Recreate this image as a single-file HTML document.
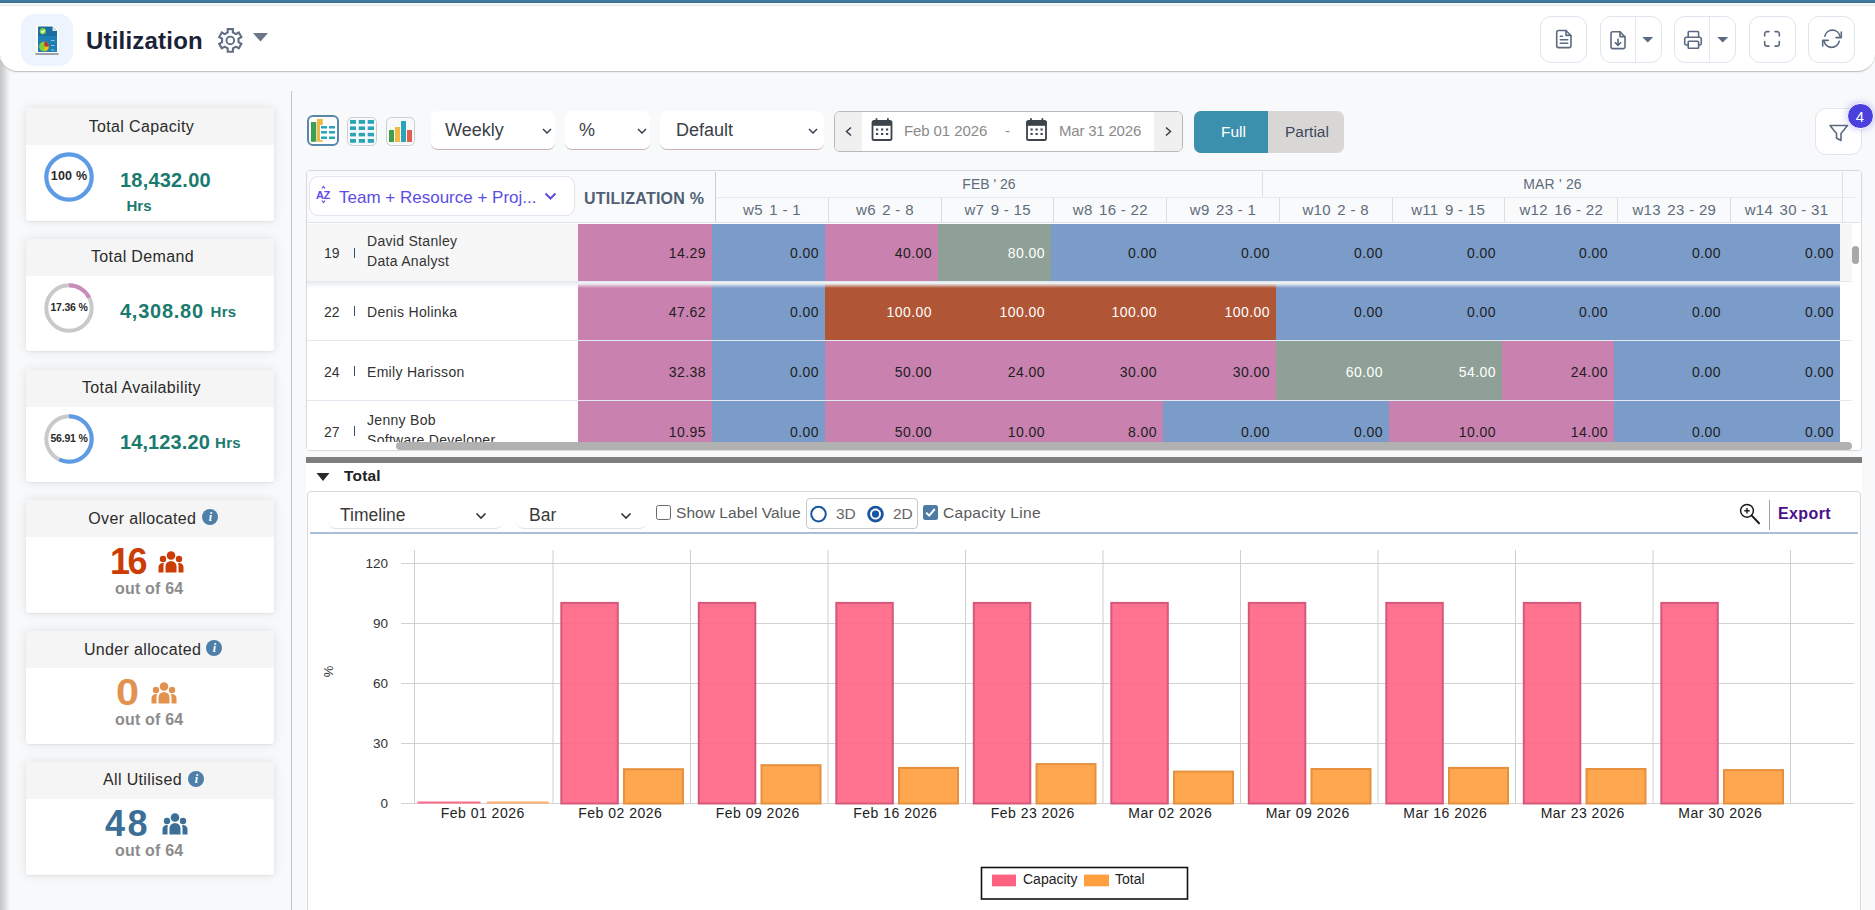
<!DOCTYPE html>
<html><head><meta charset="utf-8">
<style>
*{box-sizing:border-box;margin:0;padding:0}
html,body{width:1875px;height:910px;overflow:hidden}
body{position:relative;background:#f8f9fb;font-family:"Liberation Sans",sans-serif;color:#333}
.a{position:absolute}
.t{position:absolute;white-space:nowrap;line-height:1}
/* header */
#topbar{left:0;top:0;width:1875px;height:3px;background:linear-gradient(#437a9d 0,#437a9d 2px,#376f93 2px)}
#hdr{left:0;top:5px;width:1875px;height:67px;background:#fff;border-top:1px solid #e2e8f0;border-bottom:1px solid #c4c4c4;border-radius:0 0 18px 18px;box-shadow:0 1px 2px rgba(0,0,0,.06)}
#lshadow{left:0;top:60px;width:11px;height:850px;background:linear-gradient(90deg,#c6c6c6 0,#c8c9c9 1px,#cfd0d0 2.5px,#d9dadb 4.5px,#e5e6e8 6.5px,#f0f1f3 8.5px,#f8f9fb 11px)}
.hbtn{position:absolute;top:16px;height:47px;border:1px solid #dfe5ee;border-radius:11px;background:#fff}
/* cards */
.card{position:absolute;left:26px;width:248px;height:114px;background:#fff;border-radius:3px;box-shadow:0 0 11px rgba(0,0,0,.1),0 1px 2px rgba(0,0,0,.05)}
.card .ch{position:absolute;left:0;top:0;width:100%;height:37px;background:#f5f5f5;border-radius:2px 2px 0 0}
.card .ct{position:absolute;top:11px;left:0;width:100%;text-align:center;font-size:15px;color:#2b2b2b;line-height:1}
.num{position:absolute;color:#1b7a6e;font-weight:bold;white-space:nowrap;line-height:1}
.ring{position:absolute}
.cnt{position:absolute;left:0;width:100%;text-align:center;font-weight:bold;white-space:nowrap;line-height:1}
.outof{position:absolute;left:0;width:100%;text-align:center;top:81px;font-size:15px;font-weight:bold;color:#8a8a8a;line-height:1}
.info{display:inline-block;width:16px;height:16px;border-radius:50%;background:#4e7fa8;vertical-align:-2px;margin-left:4px;position:relative}
.info:after{content:"i";position:absolute;left:0;top:2px;width:16px;text-align:center;color:#fff;font:italic bold 12px "Liberation Serif",serif;line-height:1}
.dd{position:absolute;top:111px;height:39px;background:#fff;border-radius:7px;border-bottom:1px solid #cbb3b3}
.ddt{position:absolute;left:14px;top:10.3px;font-size:18px;color:#3b4049;line-height:1;white-space:nowrap}
.chev{position:absolute;top:17px}
.cell{position:absolute;text-align:right;padding-right:6px;font-size:14px;white-space:nowrap;letter-spacing:.45px;text-indent:0}
.rn{font-size:14px;color:#333}
.nm{font-size:14px;color:#333;letter-spacing:.3px}
.wk{font-size:14px;color:#5e6c7b;letter-spacing:.3px}
.wk b{font-weight:normal;margin-right:2px}
</style></head>
<body>
<div id="lshadow" class="a"></div>
<div id="topbar" class="a"></div>
<div id="hdr" class="a"></div>


<!-- header content -->
<div class="a" style="left:21px;top:14px;width:52px;height:52px;border-radius:14px;background:#eef4fd"></div>
<svg class="a" style="left:35px;top:24px" width="26" height="32" viewBox="0 0 26 32">
 <rect x="0.5" y="28.5" width="23" height="2.5" fill="#9aa0a6"/>
 <path d="M1 1H18L24 7V29H1z" fill="#fff"/>
 <path d="M3 2.5H17.5L22 7V28H3z" fill="#1a6d9e"/>
 <path d="M3 12H22V28H3z" fill="#1f7fb5"/>
 <path d="M17.5 2.5L22 7H17.5z" fill="#dde3e8"/>
 <circle cx="7.8" cy="7.2" r="3.1" fill="#7fd13b"/>
 <path d="M6.2 7.2l1.2 1.3 2.2-2.4" stroke="#fff" stroke-width="1.2" fill="none"/>
 <circle cx="9.2" cy="22.5" r="4.8" fill="#e8c21a"/>
 <path d="M9.2 22.5V17.7A4.8 4.8 0 0 1 14 22.5z" fill="#b7343a"/>
 <path d="M9.2 22.5V17.7A4.8 4.8 0 0 0 9.2 27.3z" fill="#7bd03a"/>
 <rect x="16" y="16" width="3.5" height="1" fill="#8cc6e6"/><rect x="16" y="21" width="3.5" height="1" fill="#8cc6e6"/><rect x="16" y="25.5" width="3.5" height="1" fill="#8cc6e6"/>
</svg>
<div class="t" style="left:86px;top:28.5px;font-size:24px;font-weight:bold;color:#1b2236;letter-spacing:.2px">Utilization</div>
<svg class="a" style="left:215px;top:25px" width="31" height="31" viewBox="215 25 31 31"><path fill="none" stroke="#5f6e82" stroke-width="2.1" stroke-linejoin="miter" d="M227.70 32.40L227.70 29.10L232.90 29.10L232.90 32.40L235.93 34.15L238.79 32.50L241.39 37.00L238.53 38.65L238.53 42.15L241.39 43.80L238.79 48.30L235.93 46.65L232.90 48.40L232.90 51.70L227.70 51.70L227.70 48.40L224.67 46.65L221.81 48.30L219.21 43.80L222.07 42.15L222.07 38.65L219.21 37.00L221.81 32.50L224.67 34.15Z"/><circle cx="230.3" cy="40.4" r="3.8" fill="none" stroke="#5f6e82" stroke-width="1.9"/></svg>
<svg class="a" style="left:253px;top:33px" width="15" height="9" viewBox="0 0 15 9"><path d="M0 0H15L7.5 8.5z" fill="#6b7689"/></svg>

<!-- header buttons -->
<div class="hbtn" style="left:1540px;width:47px"></div>
<div class="hbtn" style="left:1600px;width:62px"><div class="a" style="left:34px;top:0;width:1px;height:45px;background:#e3e8ef"></div></div>
<div class="hbtn" style="left:1674px;width:62px"><div class="a" style="left:34px;top:0;width:1px;height:45px;background:#e3e8ef"></div></div>
<div class="hbtn" style="left:1749px;width:47px"></div>
<div class="hbtn" style="left:1808px;width:47px"></div>
<svg class="a" style="left:1530px;top:10px" width="345" height="60" viewBox="1530 10 345 60" fill="none" stroke="#5b6a80" stroke-width="1.6" stroke-linejoin="round" stroke-linecap="round">
 <path d="M1558.5 30.5H1566L1571 35.8V45.8a1.8 1.8 0 0 1-1.8 1.8H1558.5a1.8 1.8 0 0 1-1.8-1.8V32.3a1.8 1.8 0 0 1 1.8-1.8z"/><path d="M1566 30.6V35.4H1570.8"/><path d="M1560.3 36.3H1562.4M1560.3 39.8H1567.7M1560.3 43.2H1567.7"/>
 <path d="M1612.8 31.7H1620L1625 37V46.8a1.8 1.8 0 0 1-1.8 1.8H1612.8a1.8 1.8 0 0 1-1.8-1.8V33.5a1.8 1.8 0 0 1 1.8-1.8z"/><path d="M1620 31.8V36.6H1624.8"/><path d="M1618 39.4V45.3M1615.4 42.7L1618 45.4L1620.6 42.7"/>
 <path d="M1688.2 37V32.3a.8.8 0 0 1 .8-.8H1697.8a.8.8 0 0 1 .8.8V37"/><path d="M1688 45H1686.3a1.6 1.6 0 0 1-1.6-1.6V39a1.8 1.8 0 0 1 1.8-1.8H1699.5a1.8 1.8 0 0 1 1.8 1.8V43.4a1.6 1.6 0 0 1-1.6 1.6H1698.6"/><rect x="1688.2" y="41.3" width="10.4" height="7" rx=".8"/>
 <path d="M1764.7 36V33.8a2.2 2.2 0 0 1 2.2-2.2H1769M1775 31.6H1777.1a2.2 2.2 0 0 1 2.2 2.2V36M1779.3 41.6V43.9a2.2 2.2 0 0 1-2.2 2.2H1775M1769 46.1H1766.9a2.2 2.2 0 0 1-2.2-2.2V41.6"/>
 <path d="M1824.8 36.2A7.8 7.8 0 0 1 1840 36.2"/><path d="M1841.3 32.1V37.6H1836"/><path d="M1839.2 41.3A7.8 7.8 0 0 1 1824 41.3"/><path d="M1822.7 46V40.4H1828.2"/>
</svg>
<svg class="a" style="left:1642px;top:37px" width="12" height="6" viewBox="0 0 12 6"><path d="M0.3 0H11.2L5.75 5.5z" fill="#5b6a80"/></svg>
<svg class="a" style="left:1717px;top:37px" width="12" height="6" viewBox="0 0 12 6"><path d="M0.3 0H11.2L5.75 5.5z" fill="#5b6a80"/></svg>
<!-- sidebar divider -->
<div class="a" style="left:291px;top:91px;width:1px;height:819px;background:#c4c4c4"></div>



<!-- toolbar -->
<div class="a" style="left:307px;top:115px;width:32px;height:31px;border:2px solid #5a87aa;border-radius:6px;background:#fff"></div>
<svg class="a" style="left:300px;top:108px" width="125" height="47" viewBox="300 108 125 47">
 <rect x="311" y="122" width="5.3" height="19.8" fill="#3f9e4f"/><rect x="317" y="119" width="5.8" height="22.8" fill="#f1b941"/>
 <rect x="320" y="125" width="16" height="15" fill="#fff"/>
 <g fill="#2ba4b8"><rect x="321" y="126" width="6" height="2.5"/><rect x="329" y="126" width="6" height="2.5"/><rect x="321" y="131" width="6" height="2.5"/><rect x="329" y="131" width="6" height="2.5"/><rect x="321" y="136.5" width="6" height="2.5"/><rect x="329" y="136.5" width="6" height="2.5"/>
 <rect x="350" y="120" width="6" height="3.8"/><rect x="358.7" y="120" width="6.3" height="3.8"/><rect x="367.7" y="120" width="6.3" height="3.8"/>
 <rect x="350" y="126.4" width="6" height="3.6"/><rect x="358.7" y="126.4" width="6.3" height="3.6"/><rect x="367.7" y="126.4" width="6.3" height="3.6"/>
 <rect x="350" y="132.8" width="6" height="3.6"/><rect x="358.7" y="132.8" width="6.3" height="3.6"/><rect x="367.7" y="132.8" width="6.3" height="3.6"/>
 <rect x="350" y="139" width="6" height="3.8"/><rect x="358.7" y="139" width="6.3" height="3.8"/><rect x="367.7" y="139" width="6.3" height="3.8"/></g>
 <rect x="347.5" y="117.5" width="29" height="28" rx="5" fill="none" stroke="#cdcdcd" stroke-width="1"/>
 <rect x="386.5" y="117.5" width="28" height="28" rx="5" fill="none" stroke="#cdcdcd" stroke-width="1"/>
 <rect x="389" y="130" width="5" height="12" fill="#3f9e4f"/><rect x="395" y="127" width="5" height="15" fill="#f1b941"/><rect x="401" y="121" width="5" height="21" fill="#2ba4b8"/><rect x="407" y="130" width="5" height="12" fill="#e35e4e"/>
</svg>
<div class="dd" style="left:431px;width:124px"><span class="ddt">Weekly</span><svg class="chev" style="left:111px" width="10" height="6" viewBox="0 0 10 6"><path d="M1 1l4 4 4-4" fill="none" stroke="#3a4250" stroke-width="1.5"/></svg></div>
<div class="dd" style="left:565px;width:85px"><span class="ddt">%</span><svg class="chev" style="left:72px" width="10" height="6" viewBox="0 0 10 6"><path d="M1 1l4 4 4-4" fill="none" stroke="#3a4250" stroke-width="1.5"/></svg></div>
<div class="dd" style="left:660px;width:164px"><span class="ddt" style="left:16px">Default</span><svg class="chev" style="left:148px" width="10" height="6" viewBox="0 0 10 6"><path d="M1 1l4 4 4-4" fill="none" stroke="#3a4250" stroke-width="1.5"/></svg></div>
<!-- date range -->
<div class="a" style="left:834px;top:111px;width:349px;height:41px;border:1px solid #b9b9b9;border-radius:6px;background:#fff;overflow:hidden">
 <div class="a" style="left:0;top:0;width:27px;height:39px;background:#f0f0f0"></div>
 <div class="a" style="left:319px;top:0;width:29px;height:39px;background:#f0f0f0"></div>
</div>
<svg class="a" style="left:830px;top:105px" width="360" height="50" viewBox="830 105 360 50">
 <path d="M851 127.5L846.5 131.5L851 135.5" fill="none" stroke="#333c4a" stroke-width="1.5"/>
 <path d="M1166 127.5L1170.5 131.5L1166 135.5" fill="none" stroke="#333c4a" stroke-width="1.5"/>
 <g id="cal"><rect x="872.5" y="121" width="19" height="19" rx="1.6" fill="none" stroke="#3d434b" stroke-width="1.8"/><rect x="872" y="121" width="20" height="4.8" fill="#3d434b"/><rect x="875.6" y="118.2" width="1.8" height="3.5" fill="#3d434b"/><rect x="887" y="118.2" width="1.8" height="3.5" fill="#3d434b"/>
 <g fill="#3d434b"><rect x="876" y="128.5" width="2.2" height="2"/><rect x="881" y="128.5" width="2.2" height="2"/><rect x="886" y="128.5" width="2.2" height="2"/><rect x="876" y="133" width="2.2" height="2"/><rect x="881" y="133" width="2.2" height="2"/><rect x="886" y="133" width="2.2" height="2"/></g></g>
 <use href="#cal" x="154.5"/>
</svg>
<div class="t" style="left:904px;top:123px;font-size:15px;letter-spacing:-.1px;color:#8a8a8a">Feb 01 2026</div>
<div class="t" style="left:1005px;top:123px;font-size:15px;color:#8a8a8a">-</div>
<div class="t" style="left:1059px;top:123px;font-size:15px;letter-spacing:-.2px;color:#8a8a8a">Mar 31 2026</div>
<!-- full partial -->
<div class="a" style="left:1194px;top:111px;width:150px;height:42px;border-radius:7px;background:#d9d7d6;overflow:hidden"><div class="a" style="left:0;top:0;width:74px;height:42px;background:#3a90ad"></div></div>
<div class="t" style="left:1221px;top:124px;font-size:15.5px;color:#fff">Full</div>
<div class="t" style="left:1285px;top:124px;font-size:15.5px;color:#3d4a5c">Partial</div>
<!-- filter -->
<div class="a" style="left:1815px;top:108px;width:47px;height:47px;border:1px solid #e2e6ec;border-radius:11px;background:#fff"></div>
<svg class="a" style="left:1828px;top:123px" width="22" height="20" viewBox="0 0 22 20"><path d="M2 2.5H19.5L13 10.5V17.5L8.5 15V10.5z" fill="none" stroke="#5b6a80" stroke-width="1.6" stroke-linejoin="round"/></svg>
<div class="a" style="left:1847px;top:102.5px;width:26.5px;height:26.5px;border-radius:50%;background:#4a40de;border:1.5px solid #fff;box-shadow:0 0 7px rgba(79,70,229,.35)"></div>
<div class="t" style="left:1847.5px;top:108.5px;width:25px;text-align:center;font-size:15px;color:#fff">4</div>

<!-- table -->
<div class="a" style="left:306px;top:170px;width:1556px;height:281px;border:1px solid #d9d9d9;border-radius:4px;background:#fff;overflow:hidden">
<div class="a" style="left:0;top:0;width:1556px;height:52px;background:#f9fafc"></div>
</div>
<div class="a" style="left:307px;top:223px;width:1553px;height:219px;overflow:hidden">
<div class="a" style="left:0;top:1px;width:271px;height:57px;background:#f7f7f7"></div>
<div class="cell" style="left:271px;top:1px;width:134px;height:57px;background:#c982b0;color:#1e1e1e;line-height:58px">14.29</div>
<div class="cell" style="left:405px;top:1px;width:113px;height:57px;background:#7b9bc9;color:#1e1e1e;line-height:58px">0.00</div>
<div class="cell" style="left:518px;top:1px;width:113px;height:57px;background:#c982b0;color:#1e1e1e;line-height:58px">40.00</div>
<div class="cell" style="left:631px;top:1px;width:113px;height:57px;background:#8fa097;color:#fff;line-height:58px">80.00</div>
<div class="cell" style="left:744px;top:1px;width:112px;height:57px;background:#7b9bc9;color:#1e1e1e;line-height:58px">0.00</div>
<div class="cell" style="left:856px;top:1px;width:113px;height:57px;background:#7b9bc9;color:#1e1e1e;line-height:58px">0.00</div>
<div class="cell" style="left:969px;top:1px;width:113px;height:57px;background:#7b9bc9;color:#1e1e1e;line-height:58px">0.00</div>
<div class="cell" style="left:1082px;top:1px;width:113px;height:57px;background:#7b9bc9;color:#1e1e1e;line-height:58px">0.00</div>
<div class="cell" style="left:1195px;top:1px;width:112px;height:57px;background:#7b9bc9;color:#1e1e1e;line-height:58px">0.00</div>
<div class="cell" style="left:1307px;top:1px;width:113px;height:57px;background:#7b9bc9;color:#1e1e1e;line-height:58px">0.00</div>
<div class="cell" style="left:1420px;top:1px;width:113px;height:57px;background:#7b9bc9;color:#1e1e1e;line-height:58px">0.00</div>
<div class="t rn" style="left:17px;top:22.5px">19</div>
<div class="a" style="left:47px;top:25.0px;width:1px;height:10px;background:#34506e"></div>
<div class="t nm" style="left:60px;top:11px">David Stanley</div>
<div class="t nm" style="left:60px;top:31px">Data Analyst</div>
<div class="a" style="left:0;top:58px;width:271px;height:59px;background:#fff"></div>
<div class="cell" style="left:271px;top:58px;width:134px;height:59px;background:#c982b0;color:#1e1e1e;line-height:62px">47.62</div>
<div class="cell" style="left:405px;top:58px;width:113px;height:59px;background:#7b9bc9;color:#1e1e1e;line-height:62px">0.00</div>
<div class="cell" style="left:518px;top:58px;width:113px;height:59px;background:#b05535;color:#fff;line-height:62px">100.00</div>
<div class="cell" style="left:631px;top:58px;width:113px;height:59px;background:#b05535;color:#fff;line-height:62px">100.00</div>
<div class="cell" style="left:744px;top:58px;width:112px;height:59px;background:#b05535;color:#fff;line-height:62px">100.00</div>
<div class="cell" style="left:856px;top:58px;width:113px;height:59px;background:#b05535;color:#fff;line-height:62px">100.00</div>
<div class="cell" style="left:969px;top:58px;width:113px;height:59px;background:#7b9bc9;color:#1e1e1e;line-height:62px">0.00</div>
<div class="cell" style="left:1082px;top:58px;width:113px;height:59px;background:#7b9bc9;color:#1e1e1e;line-height:62px">0.00</div>
<div class="cell" style="left:1195px;top:58px;width:112px;height:59px;background:#7b9bc9;color:#1e1e1e;line-height:62px">0.00</div>
<div class="cell" style="left:1307px;top:58px;width:113px;height:59px;background:#7b9bc9;color:#1e1e1e;line-height:62px">0.00</div>
<div class="cell" style="left:1420px;top:58px;width:113px;height:59px;background:#7b9bc9;color:#1e1e1e;line-height:62px">0.00</div>
<div class="t rn" style="left:17px;top:82px">22</div>
<div class="a" style="left:47px;top:83.0px;width:1px;height:10px;background:#34506e"></div>
<div class="t nm" style="left:60px;top:82px">Denis Holinka</div>
<div class="a" style="left:0;top:118px;width:271px;height:59px;background:#fff"></div>
<div class="cell" style="left:271px;top:118px;width:134px;height:59px;background:#c982b0;color:#1e1e1e;line-height:62px">32.38</div>
<div class="cell" style="left:405px;top:118px;width:113px;height:59px;background:#7b9bc9;color:#1e1e1e;line-height:62px">0.00</div>
<div class="cell" style="left:518px;top:118px;width:113px;height:59px;background:#c982b0;color:#1e1e1e;line-height:62px">50.00</div>
<div class="cell" style="left:631px;top:118px;width:113px;height:59px;background:#c982b0;color:#1e1e1e;line-height:62px">24.00</div>
<div class="cell" style="left:744px;top:118px;width:112px;height:59px;background:#c982b0;color:#1e1e1e;line-height:62px">30.00</div>
<div class="cell" style="left:856px;top:118px;width:113px;height:59px;background:#c982b0;color:#1e1e1e;line-height:62px">30.00</div>
<div class="cell" style="left:969px;top:118px;width:113px;height:59px;background:#8fa097;color:#fff;line-height:62px">60.00</div>
<div class="cell" style="left:1082px;top:118px;width:113px;height:59px;background:#8fa097;color:#fff;line-height:62px">54.00</div>
<div class="cell" style="left:1195px;top:118px;width:112px;height:59px;background:#c982b0;color:#1e1e1e;line-height:62px">24.00</div>
<div class="cell" style="left:1307px;top:118px;width:113px;height:59px;background:#7b9bc9;color:#1e1e1e;line-height:62px">0.00</div>
<div class="cell" style="left:1420px;top:118px;width:113px;height:59px;background:#7b9bc9;color:#1e1e1e;line-height:62px">0.00</div>
<div class="t rn" style="left:17px;top:141.5px">24</div>
<div class="a" style="left:47px;top:143.0px;width:1px;height:10px;background:#34506e"></div>
<div class="t nm" style="left:60px;top:141.5px">Emily Harisson</div>
<div class="a" style="left:0;top:178px;width:271px;height:59px;background:#fff"></div>
<div class="cell" style="left:271px;top:178px;width:134px;height:59px;background:#c982b0;color:#1e1e1e;line-height:62px">10.95</div>
<div class="cell" style="left:405px;top:178px;width:113px;height:59px;background:#7b9bc9;color:#1e1e1e;line-height:62px">0.00</div>
<div class="cell" style="left:518px;top:178px;width:113px;height:59px;background:#c982b0;color:#1e1e1e;line-height:62px">50.00</div>
<div class="cell" style="left:631px;top:178px;width:113px;height:59px;background:#c982b0;color:#1e1e1e;line-height:62px">10.00</div>
<div class="cell" style="left:744px;top:178px;width:112px;height:59px;background:#c982b0;color:#1e1e1e;line-height:62px">8.00</div>
<div class="cell" style="left:856px;top:178px;width:113px;height:59px;background:#7b9bc9;color:#1e1e1e;line-height:62px">0.00</div>
<div class="cell" style="left:969px;top:178px;width:113px;height:59px;background:#7b9bc9;color:#1e1e1e;line-height:62px">0.00</div>
<div class="cell" style="left:1082px;top:178px;width:113px;height:59px;background:#c982b0;color:#1e1e1e;line-height:62px">10.00</div>
<div class="cell" style="left:1195px;top:178px;width:112px;height:59px;background:#c982b0;color:#1e1e1e;line-height:62px">14.00</div>
<div class="cell" style="left:1307px;top:178px;width:113px;height:59px;background:#7b9bc9;color:#1e1e1e;line-height:62px">0.00</div>
<div class="cell" style="left:1420px;top:178px;width:113px;height:59px;background:#7b9bc9;color:#1e1e1e;line-height:62px">0.00</div>
<div class="t rn" style="left:17px;top:201.5px">27</div>
<div class="a" style="left:47px;top:203.0px;width:1px;height:10px;background:#34506e"></div>
<div class="t nm" style="left:60px;top:189.5px">Jenny Bob</div>
<div class="t nm" style="left:60px;top:209.5px">Software Developer</div>
<div class="a" style="left:0;top:58px;width:1533px;height:1px;background:#e2e8f0"></div>
<div class="a" style="left:0;top:59px;width:1533px;height:7px;background:linear-gradient(rgba(236,239,242,1) 0,rgba(236,239,242,1) 1.5px,rgba(236,239,242,0) 6px)"></div>
<div class="a" style="left:0;top:117px;width:1533px;height:1px;background:#e4eaf1"></div>
<div class="a" style="left:0;top:177px;width:1533px;height:1px;background:#e4eaf1"></div>
</div>
<div class="a" style="left:1840px;top:223px;width:20px;height:219px;background:#fff"></div>
<div class="a" style="left:1840px;top:224px;width:12px;height:57px;background:#f7f7f7"></div><div class="a" style="left:1840px;top:281px;width:12px;height:1px;background:#e2e8f0"></div><div class="a" style="left:1840px;top:340px;width:12px;height:1px;background:#e4eaf1"></div><div class="a" style="left:1840px;top:400px;width:12px;height:1px;background:#e4eaf1"></div>
<div class="a" style="left:1852px;top:246px;width:7px;height:18px;border-radius:4px;background:#a8a8a8"></div>
<div class="a" style="left:307px;top:442px;width:1553px;height:8px;background:#fff"></div>
<div class="a" style="left:396px;top:442px;width:1456px;height:8px;border-radius:4px;background:#b1b1b1"></div>
<div class="a" style="left:309px;top:176px;width:266px;height:40px;border:1px solid #dfe6ef;border-radius:9px;background:#fff"></div>
<svg class="a" style="left:315px;top:184px" width="18" height="20" viewBox="0 0 18 20"><text x="1" y="15" font-family="Liberation Sans" font-weight="bold" font-size="11" fill="#5d4bea" letter-spacing="-0.5">AZ</text><path d="M7 4.5L8.5 2.5L10 4.5M7 16.5L8.5 18.5L10 16.5" fill="none" stroke="#5d4bea" stroke-width="1.2"/></svg>
<div class="t" style="left:339px;top:189px;font-size:17px;color:#5b4de6">Team + Resource + Proj...</div>
<svg class="a" style="left:544px;top:192px" width="13" height="9" viewBox="0 0 13 9"><path d="M1.5 1.5L6.5 6.5L11.5 1.5" fill="none" stroke="#5b4de6" stroke-width="2"/></svg>
<div class="t" style="left:584px;top:191px;font-size:16px;font-weight:bold;letter-spacing:.25px;color:#4f6074">UTILIZATION %</div>
<div class="a" style="left:715px;top:172px;width:1px;height:50px;background:#c9ced5"></div>
<div class="a" style="left:716px;top:197px;width:1139px;height:1px;background:#e6e9ee"></div>
<div class="a" style="left:1262px;top:172px;width:1px;height:25px;background:#dde1e6"></div>
<div class="a" style="left:1842px;top:172px;width:1px;height:50px;background:#dde1e6"></div>
<div class="a" style="left:307px;top:222px;width:1553px;height:1px;background:#dfe3e8"></div>
<div class="t wk" style="left:716px;top:177px;width:546px;text-align:center;letter-spacing:0">FEB ' 26</div>
<div class="t wk" style="left:1263px;top:177px;width:579px;text-align:center;letter-spacing:.2px">MAR ' 26</div>
<div class="t wk" style="left:715.5px;top:202px;width:113.0px;text-align:center;font-size:15px"><b>w5</b> 1 - 1</div>
<div class="a" style="left:828px;top:198px;width:1px;height:24px;background:#e1dcdc"></div>
<div class="t wk" style="left:828.5px;top:202px;width:112.8px;text-align:center;font-size:15px"><b>w6</b> 2 - 8</div>
<div class="a" style="left:941px;top:198px;width:1px;height:24px;background:#e1dcdc"></div>
<div class="t wk" style="left:941.3px;top:202px;width:112.7px;text-align:center;font-size:15px"><b>w7</b> 9 - 15</div>
<div class="a" style="left:1053px;top:198px;width:1px;height:24px;background:#e1dcdc"></div>
<div class="t wk" style="left:1054.0px;top:202px;width:112.6px;text-align:center;font-size:15px"><b>w8</b> 16 - 22</div>
<div class="a" style="left:1166px;top:198px;width:1px;height:24px;background:#e1dcdc"></div>
<div class="t wk" style="left:1166.6px;top:202px;width:112.9px;text-align:center;font-size:15px"><b>w9</b> 23 - 1</div>
<div class="a" style="left:1279px;top:198px;width:1px;height:24px;background:#e1dcdc"></div>
<div class="t wk" style="left:1279.5px;top:202px;width:112.2px;text-align:center;font-size:15px"><b>w10</b> 2 - 8</div>
<div class="a" style="left:1392px;top:198px;width:1px;height:24px;background:#e1dcdc"></div>
<div class="t wk" style="left:1391.7px;top:202px;width:112.9px;text-align:center;font-size:15px"><b>w11</b> 9 - 15</div>
<div class="a" style="left:1504px;top:198px;width:1px;height:24px;background:#e1dcdc"></div>
<div class="t wk" style="left:1504.6px;top:202px;width:113.3px;text-align:center;font-size:15px"><b>w12</b> 16 - 22</div>
<div class="a" style="left:1617px;top:198px;width:1px;height:24px;background:#e1dcdc"></div>
<div class="t wk" style="left:1617.9px;top:202px;width:112.9px;text-align:center;font-size:15px"><b>w13</b> 23 - 29</div>
<div class="a" style="left:1730px;top:198px;width:1px;height:24px;background:#e1dcdc"></div>
<div class="t wk" style="left:1730.8px;top:202px;width:111.4px;text-align:center;font-size:15px"><b>w14</b> 30 - 31</div>
<!-- bottom section -->
<div class="a" style="left:306px;top:457px;width:1556px;height:6px;background:#7f7f7f"></div>
<div class="a" style="left:306px;top:463px;width:1556px;height:447px;background:#fff"></div>
<svg class="a" style="left:316px;top:472px" width="15" height="10" viewBox="0 0 15 10"><path d="M0.5 1H13.5L7 9z" fill="#2a2a2a"/></svg>
<div class="t" style="left:344px;top:468px;font-size:15.5px;font-weight:bold;letter-spacing:.2px;color:#222">Total</div>
<div class="a" style="left:307px;top:491px;width:1554px;height:430px;border:1px solid #d6d6d6;border-radius:4px;background:#fff"></div>
<div class="a" style="left:328px;top:496px;width:175px;height:33px;border-bottom:1px solid #e3e3e3;border-radius:8px"></div>
<div class="t" style="left:340px;top:507px;font-size:17.5px;color:#3a3a3a">Timeline</div>
<svg class="a" style="left:475px;top:512px" width="12" height="8" viewBox="0 0 12 8"><path d="M1.5 1.5L6 6L10.5 1.5" fill="none" stroke="#333" stroke-width="1.6"/></svg>
<div class="a" style="left:516px;top:496px;width:131px;height:33px;border-bottom:1px solid #e3e3e3;border-radius:8px"></div>
<div class="t" style="left:529px;top:507px;font-size:17.5px;color:#3a3a3a">Bar</div>
<svg class="a" style="left:620px;top:512px" width="12" height="8" viewBox="0 0 12 8"><path d="M1.5 1.5L6 6L10.5 1.5" fill="none" stroke="#333" stroke-width="1.6"/></svg>
<div class="a" style="left:656px;top:505px;width:15px;height:15px;border:1.6px solid #6a6a6a;border-radius:2.5px;background:#fff"></div>
<div class="t" style="left:676px;top:505px;font-size:15.5px;letter-spacing:.05px;color:#5a5a5a">Show Label Value</div>
<div class="a" style="left:806px;top:498px;width:112px;height:31px;border:1px solid #c9c9c9;border-radius:4px"></div>
<svg class="a" style="left:806px;top:500px" width="80" height="28" viewBox="806 500 80 28"><circle cx="818.5" cy="514.1" r="7.3" fill="none" stroke="#1a56a0" stroke-width="2"/><circle cx="875.5" cy="514.1" r="8.3" fill="#1a56a0"/><circle cx="875.5" cy="514.1" r="5.5" fill="#fff"/><circle cx="875.5" cy="514.1" r="3.6" fill="#1a56a0"/></svg>
<div class="t" style="left:836px;top:506px;font-size:15.5px;color:#666">3D</div>
<div class="t" style="left:893px;top:506px;font-size:15.5px;color:#666">2D</div>
<svg class="a" style="left:923px;top:505px" width="15" height="15" viewBox="0 0 15 15"><rect x="0" y="0" width="15" height="15" rx="2.5" fill="#4d7ba3"/><path d="M3.2 7.6L6.2 10.6L11.8 4" fill="none" stroke="#fff" stroke-width="2"/></svg>
<div class="t" style="left:943px;top:505px;font-size:15.5px;letter-spacing:.3px;color:#5a5a5a">Capacity Line</div>
<svg class="a" style="left:1738px;top:502px" width="24" height="24" viewBox="1738 502 24 24"><circle cx="1747" cy="510.8" r="6.4" fill="none" stroke="#1a1a1a" stroke-width="1.5"/><path d="M1744.3 510.8H1749.7M1747 508.1V513.5" stroke="#1a1a1a" stroke-width="1.4"/><path d="M1751.8 515.6L1759 523.2" stroke="#1a1a1a" stroke-width="2" stroke-linecap="round"/></svg>
<div class="a" style="left:1769px;top:500px;width:1px;height:30px;background:#a0a0a0"></div>
<div class="t" style="left:1778px;top:506px;font-size:16px;font-weight:bold;letter-spacing:.4px;color:#4b1085">Export</div>
<div class="a" style="left:310px;top:532px;width:1548px;height:2px;background:#a9bedb"></div>
<svg class="a" style="left:307px;top:535px" width="1553" height="375" viewBox="307 535 1553 375" font-family="Liberation Sans">
<line x1="401" y1="563.5" x2="1854" y2="563.5" stroke="#d2d2d2" stroke-width="1"/>
<text x="388" y="568.3" text-anchor="end" font-size="13.5" fill="#333">120</text>
<line x1="401" y1="623.5" x2="1854" y2="623.5" stroke="#d2d2d2" stroke-width="1"/>
<text x="388" y="628.3" text-anchor="end" font-size="13.5" fill="#333">90</text>
<line x1="401" y1="683.5" x2="1854" y2="683.5" stroke="#d2d2d2" stroke-width="1"/>
<text x="388" y="688.3" text-anchor="end" font-size="13.5" fill="#333">60</text>
<line x1="401" y1="743.5" x2="1854" y2="743.5" stroke="#d2d2d2" stroke-width="1"/>
<text x="388" y="748.3" text-anchor="end" font-size="13.5" fill="#333">30</text>
<line x1="401" y1="803.5" x2="1854" y2="803.5" stroke="#d2d2d2" stroke-width="1"/>
<text x="388" y="808.3" text-anchor="end" font-size="13.5" fill="#333">0</text>
<line x1="414.5" y1="550" x2="414.5" y2="803.5" stroke="#cfcfcf" stroke-width="1"/>
<line x1="553.0" y1="550" x2="553.0" y2="803.5" stroke="#cfcfcf" stroke-width="1"/>
<line x1="690.5" y1="550" x2="690.5" y2="803.5" stroke="#cfcfcf" stroke-width="1"/>
<line x1="828.0" y1="550" x2="828.0" y2="803.5" stroke="#cfcfcf" stroke-width="1"/>
<line x1="965.5" y1="550" x2="965.5" y2="803.5" stroke="#cfcfcf" stroke-width="1"/>
<line x1="1103.0" y1="550" x2="1103.0" y2="803.5" stroke="#cfcfcf" stroke-width="1"/>
<line x1="1240.5" y1="550" x2="1240.5" y2="803.5" stroke="#cfcfcf" stroke-width="1"/>
<line x1="1378.0" y1="550" x2="1378.0" y2="803.5" stroke="#cfcfcf" stroke-width="1"/>
<line x1="1515.5" y1="550" x2="1515.5" y2="803.5" stroke="#cfcfcf" stroke-width="1"/>
<line x1="1653.0" y1="550" x2="1653.0" y2="803.5" stroke="#cfcfcf" stroke-width="1"/>
<line x1="1790.5" y1="550" x2="1790.5" y2="803.5" stroke="#cfcfcf" stroke-width="1"/>
<rect x="417.5" y="801.5" width="63" height="2" fill="#ff6b8a"/>
<rect x="486.8" y="801.5" width="62" height="2" fill="#ffb070"/>
<text x="482.7" y="818" text-anchor="middle" font-size="14" letter-spacing=".5" fill="#222">Feb 01 2026</text>
<rect x="561.3" y="602.9" width="56.5" height="200.6" fill="rgba(255,99,132,.9)" stroke="#d6587a" stroke-width="2"/>
<rect x="624.0" y="769.2" width="59" height="34.3" fill="rgba(255,159,64,.92)" stroke="#e5903e" stroke-width="2"/>
<text x="620.3" y="818" text-anchor="middle" font-size="14" letter-spacing=".5" fill="#222">Feb 02 2026</text>
<rect x="698.8" y="602.9" width="56.5" height="200.6" fill="rgba(255,99,132,.9)" stroke="#d6587a" stroke-width="2"/>
<rect x="761.5" y="765.2" width="59" height="38.3" fill="rgba(255,159,64,.92)" stroke="#e5903e" stroke-width="2"/>
<text x="757.7" y="818" text-anchor="middle" font-size="14" letter-spacing=".5" fill="#222">Feb 09 2026</text>
<rect x="836.3" y="602.9" width="56.5" height="200.6" fill="rgba(255,99,132,.9)" stroke="#d6587a" stroke-width="2"/>
<rect x="899.0" y="767.9" width="59" height="35.6" fill="rgba(255,159,64,.92)" stroke="#e5903e" stroke-width="2"/>
<text x="895.3" y="818" text-anchor="middle" font-size="14" letter-spacing=".5" fill="#222">Feb 16 2026</text>
<rect x="973.8" y="602.9" width="56.5" height="200.6" fill="rgba(255,99,132,.9)" stroke="#d6587a" stroke-width="2"/>
<rect x="1036.5" y="764.1" width="59" height="39.4" fill="rgba(255,159,64,.92)" stroke="#e5903e" stroke-width="2"/>
<text x="1032.7" y="818" text-anchor="middle" font-size="14" letter-spacing=".5" fill="#222">Feb 23 2026</text>
<rect x="1111.3" y="602.9" width="56.5" height="200.6" fill="rgba(255,99,132,.9)" stroke="#d6587a" stroke-width="2"/>
<rect x="1174.0" y="771.6" width="59" height="31.9" fill="rgba(255,159,64,.92)" stroke="#e5903e" stroke-width="2"/>
<text x="1170.3" y="818" text-anchor="middle" font-size="14" letter-spacing=".5" fill="#222">Mar 02 2026</text>
<rect x="1248.8" y="602.9" width="56.5" height="200.6" fill="rgba(255,99,132,.9)" stroke="#d6587a" stroke-width="2"/>
<rect x="1311.5" y="769.0" width="59" height="34.5" fill="rgba(255,159,64,.92)" stroke="#e5903e" stroke-width="2"/>
<text x="1307.7" y="818" text-anchor="middle" font-size="14" letter-spacing=".5" fill="#222">Mar 09 2026</text>
<rect x="1386.3" y="602.9" width="56.5" height="200.6" fill="rgba(255,99,132,.9)" stroke="#d6587a" stroke-width="2"/>
<rect x="1449.0" y="767.9" width="59" height="35.6" fill="rgba(255,159,64,.92)" stroke="#e5903e" stroke-width="2"/>
<text x="1445.3" y="818" text-anchor="middle" font-size="14" letter-spacing=".5" fill="#222">Mar 16 2026</text>
<rect x="1523.8" y="602.9" width="56.5" height="200.6" fill="rgba(255,99,132,.9)" stroke="#d6587a" stroke-width="2"/>
<rect x="1586.5" y="769.0" width="59" height="34.5" fill="rgba(255,159,64,.92)" stroke="#e5903e" stroke-width="2"/>
<text x="1582.7" y="818" text-anchor="middle" font-size="14" letter-spacing=".5" fill="#222">Mar 23 2026</text>
<rect x="1661.3" y="602.9" width="56.5" height="200.6" fill="rgba(255,99,132,.9)" stroke="#d6587a" stroke-width="2"/>
<rect x="1724.0" y="770.1" width="59" height="33.4" fill="rgba(255,159,64,.92)" stroke="#e5903e" stroke-width="2"/>
<text x="1720.3" y="818" text-anchor="middle" font-size="14" letter-spacing=".5" fill="#222">Mar 30 2026</text>
<text transform="translate(332.5 671.5) rotate(-90)" text-anchor="middle" font-size="13" fill="#333">%</text>
<rect x="981.5" y="867.5" width="206" height="31.5" fill="#fff" stroke="#111" stroke-width="1.6"/>
<rect x="992" y="874.6" width="24" height="11.7" fill="#ff6180"/>
<text x="1023" y="883.5" font-size="14" fill="#222">Capacity</text>
<rect x="1084" y="874.6" width="25" height="11.7" fill="#ff9f40"/>
<text x="1115" y="883.5" font-size="14" fill="#222">Total</text>
</svg>
<!-- cards -->
<div class="card" style="top:108px;height:113px"><div class="ch"></div></div>
<div class="card" style="top:239px;height:112px"><div class="ch"></div></div>
<div class="card" style="top:370px;height:112px"><div class="ch"></div></div>
<div class="card" style="top:500px;height:113px"><div class="ch"></div></div>
<div class="card" style="top:631px;height:113px"><div class="ch"></div></div>
<div class="card" style="top:762px;height:113px"><div class="ch"></div></div>
<div class="t" style="left:88.7px;top:118.7px;font-size:16px;letter-spacing:.35px;color:#2b2b2b">Total Capacity</div>
<div class="t" style="left:91.0px;top:248.5px;font-size:16px;letter-spacing:.35px;color:#2b2b2b">Total Demand</div>
<div class="t" style="left:82.0px;top:379.7px;font-size:16px;letter-spacing:.35px;color:#2b2b2b">Total Availability</div>
<div class="t" style="left:88.3px;top:510.8px;font-size:16px;letter-spacing:.35px;color:#2b2b2b">Over allocated</div>
<div class="t" style="left:83.9px;top:641.5px;font-size:16px;letter-spacing:.35px;color:#2b2b2b">Under allocated</div>
<div class="t" style="left:103.0px;top:771.5px;font-size:16px;letter-spacing:.35px;color:#2b2b2b">All Utilised</div>
<svg class="a" style="left:202px;top:509px" width="16" height="16" viewBox="0 0 16 16"><circle cx="8" cy="8" r="8" fill="#4e7fa8"/><text x="8.3" y="12.3" text-anchor="middle" font-family="Liberation Serif" font-style="italic" font-weight="bold" font-size="12" fill="#fff">i</text></svg>
<svg class="a" style="left:206px;top:640px" width="16" height="16" viewBox="0 0 16 16"><circle cx="8" cy="8" r="8" fill="#4e7fa8"/><text x="8.3" y="12.3" text-anchor="middle" font-family="Liberation Serif" font-style="italic" font-weight="bold" font-size="12" fill="#fff">i</text></svg>
<svg class="a" style="left:188px;top:771px" width="16" height="16" viewBox="0 0 16 16"><circle cx="8" cy="8" r="8" fill="#4e7fa8"/><text x="8.3" y="12.3" text-anchor="middle" font-family="Liberation Serif" font-style="italic" font-weight="bold" font-size="12" fill="#fff">i</text></svg>
<svg class="a" style="left:43px;top:150.5px" width="52" height="52" viewBox="0 0 52 52"><circle cx="26" cy="26" r="22.7" fill="none" stroke="#5d9be6" stroke-width="4.2"/></svg>
<svg class="a" style="left:43px;top:281.7px" width="52" height="52" viewBox="0 0 52 52"><circle cx="26" cy="26" r="22.7" fill="none" stroke="#c9c9c9" stroke-width="4"/><circle cx="26" cy="26" r="22.7" fill="none" stroke="#c98bbd" stroke-width="4" stroke-dasharray="24.65 300" transform="rotate(-90 26 26)"/></svg>
<svg class="a" style="left:43px;top:412.6px" width="52" height="52" viewBox="0 0 52 52"><circle cx="26" cy="26" r="22.7" fill="none" stroke="#c9c9c9" stroke-width="4"/><circle cx="26" cy="26" r="22.7" fill="none" stroke="#5d9be6" stroke-width="4" stroke-dasharray="80.81 300" transform="rotate(-90 26 26)"/></svg>
<div class="t" style="left:44px;top:170px;width:50px;text-align:center;font-size:12.5px;font-weight:bold;letter-spacing:.2px;color:#2a2a2a">100 %</div>
<div class="t" style="left:44px;top:302px;width:50px;text-align:center;font-size:10.5px;font-weight:bold;letter-spacing:-.2px;color:#2a2a2a">17.36 %</div>
<div class="t" style="left:44px;top:433px;width:50px;text-align:center;font-size:10.5px;font-weight:bold;letter-spacing:-.2px;color:#2a2a2a">56.91 %</div>
<div class="num" style="left:120px;top:170.1px;font-size:20px;letter-spacing:.2px">18,432.00</div>
<div class="num" style="left:126.5px;top:197.8px;font-size:15px">Hrs</div>
<div class="num" style="left:120px;top:301.2px;font-size:20px;letter-spacing:.75px">4,308.80</div>
<div class="num" style="left:210.5px;top:304.3px;font-size:15px;letter-spacing:.3px">Hrs</div>
<div class="num" style="left:120px;top:432.1px;font-size:20px;letter-spacing:.1px">14,123.20</div>
<div class="num" style="left:215px;top:435.3px;font-size:15px;letter-spacing:.3px">Hrs</div>
<div class="t" style="left:110px;top:543.6px;font-size:36px;font-weight:bold;letter-spacing:-2.5px;color:#cc3d05">16</div>
<svg class="a" style="left:158px;top:551px" width="26" height="22" viewBox="0 0 26 22"><g fill="#cc3d05"><circle cx="13" cy="4.5" r="4.3"/><circle cx="5" cy="8" r="3.2"/><circle cx="21" cy="8" r="3.2"/><path d="M7.5 21.5V15.5a5.5 5.5 0 0 1 11 0V21.5z"/><path d="M0.5 21.5V16a4 4 0 0 1 5.5-3.7 7 7 0 0 0-.5 2.7V21.5z"/><path d="M25.5 21.5V16a4 4 0 0 0-5.5-3.7 7 7 0 0 1 .5 2.7V21.5z"/></g></svg>
<div class="t" style="left:116px;top:674.6px;font-size:36px;font-weight:bold;color:#e2924f;transform:scaleX(1.15);transform-origin:left">0</div>
<svg class="a" style="left:150.5px;top:682px" width="26" height="22" viewBox="0 0 26 22"><g fill="#e2924f"><circle cx="13" cy="4.5" r="4.3"/><circle cx="5" cy="8" r="3.2"/><circle cx="21" cy="8" r="3.2"/><path d="M7.5 21.5V15.5a5.5 5.5 0 0 1 11 0V21.5z"/><path d="M0.5 21.5V16a4 4 0 0 1 5.5-3.7 7 7 0 0 0-.5 2.7V21.5z"/><path d="M25.5 21.5V16a4 4 0 0 0-5.5-3.7 7 7 0 0 1 .5 2.7V21.5z"/></g></svg>
<div class="t" style="left:105px;top:805.6px;font-size:36px;font-weight:bold;letter-spacing:2.5px;color:#3b6f97">48</div>
<svg class="a" style="left:162px;top:813px" width="26" height="22" viewBox="0 0 26 22"><g fill="#3b6f97"><circle cx="13" cy="4.5" r="4.3"/><circle cx="5" cy="8" r="3.2"/><circle cx="21" cy="8" r="3.2"/><path d="M7.5 21.5V15.5a5.5 5.5 0 0 1 11 0V21.5z"/><path d="M0.5 21.5V16a4 4 0 0 1 5.5-3.7 7 7 0 0 0-.5 2.7V21.5z"/><path d="M25.5 21.5V16a4 4 0 0 0-5.5-3.7 7 7 0 0 1 .5 2.7V21.5z"/></g></svg>
<div class="t" style="left:115px;top:580.5px;font-size:16px;font-weight:bold;letter-spacing:.2px;color:#8c8c8c">out of 64</div>
<div class="t" style="left:115px;top:711.5px;font-size:16px;font-weight:bold;letter-spacing:.2px;color:#8c8c8c">out of 64</div>
<div class="t" style="left:115px;top:842.5px;font-size:16px;font-weight:bold;letter-spacing:.2px;color:#8c8c8c">out of 64</div>
</body></html>
